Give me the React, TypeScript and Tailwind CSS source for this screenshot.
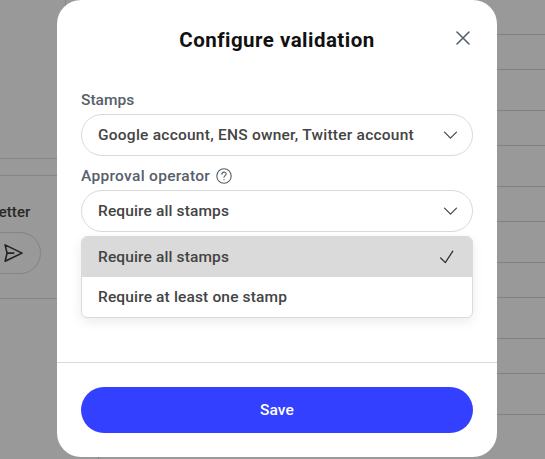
import React from "react";

const rows = [
  "h-[35px]", "h-[35px]", "h-[41px]", "h-[35px]", "h-[41px]", "h-[35px]",
  "h-[41px]", "h-[35px]", "h-[41px]", "h-[35px]", "h-[41px]",
];

function Chevron() {
  return (
    <svg width="14" height="9" viewBox="0 0 14 9" fill="none" stroke="#444" strokeWidth="1.2" strokeLinecap="round" strokeLinejoin="round">
      <path d="M1.5 1.2L7.5 7.2L13.5 1.2" />
    </svg>
  );
}

function Select({ value, spacing }: { value: string; spacing: string }) {
  return (
    <button className="flex h-[42px] w-full items-center justify-between rounded-full border border-[#dadada] pr-[15px] pl-4 text-[#444]">
      <span className={spacing}>{value}</span>
      <Chevron />
    </button>
  );
}

function Backdrop() {
  return (
    <div className="flex h-full justify-between">
      <div className="flex w-[99px] flex-col">
        <div className="h-[159px] w-[66px] border-r border-b border-[#858585]" />
        <div className="mt-4 h-[124px] w-[66px] border-y border-[#858585]">
          <div className="mt-[26px] flex w-[30.5px] justify-end text-[15px] leading-5 font-medium tracking-[0.1px] text-[#282828]">Newsletter</div>
          <div className="mt-[10px] flex h-[42px] w-[41px] items-center rounded-r-full border border-l-0 border-[#858585] pl-1">
            <svg width="20" height="20" viewBox="0 0 20 20" fill="none" stroke="#222" strokeWidth="1.6" strokeLinejoin="round" strokeLinecap="round">
              <path d="M1.1 1.9L18 10.1L1.1 18.2L3.1 10.1L1.1 1.9Z" />
              <path d="M3.1 10.1H9.7" />
            </svg>
          </div>
        </div>
        <div className="grow border-r border-[#858585]" />
      </div>
      <div className="w-[60px]">
        {rows.map((height, i) => (
          <div key={i} className={`border-b border-[#828282] ${height}`} />
        ))}
      </div>
    </div>
  );
}

export default function App() {
  return (
    <div className="relative h-[459px] w-[545px] overflow-hidden bg-[#999] font-['Roboto',sans-serif]">
      <Backdrop />
      <div className="absolute top-0 left-[57px] flex h-[457px] w-[440px] flex-col rounded-[24px] bg-white text-[15.5px] leading-6 font-medium">
        <header className="relative pt-[26px] text-center">
          <h3 className="text-[20.5px] leading-7 font-bold tracking-[0.47px] text-[#111]">Configure validation</h3>
          <button className="absolute top-[31px] right-[27px]" aria-label="Close">
            <svg width="14" height="14" viewBox="0 0 14 14" stroke="#57606a" strokeWidth="1.6" strokeLinecap="round">
              <path d="M1 1L13 13M13 1L1 13" />
            </svg>
          </button>
        </header>
        <main className="relative grow px-6 pt-[34px]">
          <div className="mb-[2px] tracking-[0.02px] text-[#57606a]">Stamps</div>
          <Select value="Google account, ENS owner, Twitter account" spacing="tracking-[0.24px]" />
          <div className="mt-2 mb-[2px] flex items-center gap-[6px] text-[#57606a]">
            <span className="tracking-[0.31px]">Approval operator</span>
            <svg width="16" height="16" viewBox="0 0 16 16" fill="none" stroke="currentColor" strokeWidth="1.1" strokeLinecap="round" strokeLinejoin="round">
              <circle cx="8" cy="8" r="7.2" />
              <path d="M5.9 6.2C5.9 3.4 10.2 3.5 10.2 6C10.2 7.6 8 7.7 8 9.3" />
              <circle cx="8" cy="11.7" r=".6" fill="currentColor" stroke="none" />
            </svg>
          </div>
          <Select value="Require all stamps" spacing="tracking-[0.13px]" />
          <ul className="absolute top-[182px] right-6 left-6 h-[82px] overflow-hidden rounded-md border border-[#dadada] bg-white text-[#444] shadow-[0_4px_12px_rgba(0,0,0,0.08)]">
            <li className="flex h-10 items-center justify-between bg-[#dadada] pr-[18px] pl-4">
              <span className="tracking-[0.13px]">Require all stamps</span>
              <svg width="14" height="14" viewBox="0 0 14 14" fill="none" stroke="#333" strokeWidth="1.3" strokeLinecap="round" strokeLinejoin="round">
                <path d="M.7 8L5.3 12.6L12.8 1.2" />
              </svg>
            </li>
            <li className="flex h-10 items-center pl-4 tracking-[0.15px]">Require at least one stamp</li>
          </ul>
        </main>
        <footer className="border-t border-[#dadada] p-6">
          <button className="h-[46px] w-full rounded-full bg-[#3340ff] tracking-[0.1px] text-white">Save</button>
        </footer>
      </div>
    </div>
  );
}
